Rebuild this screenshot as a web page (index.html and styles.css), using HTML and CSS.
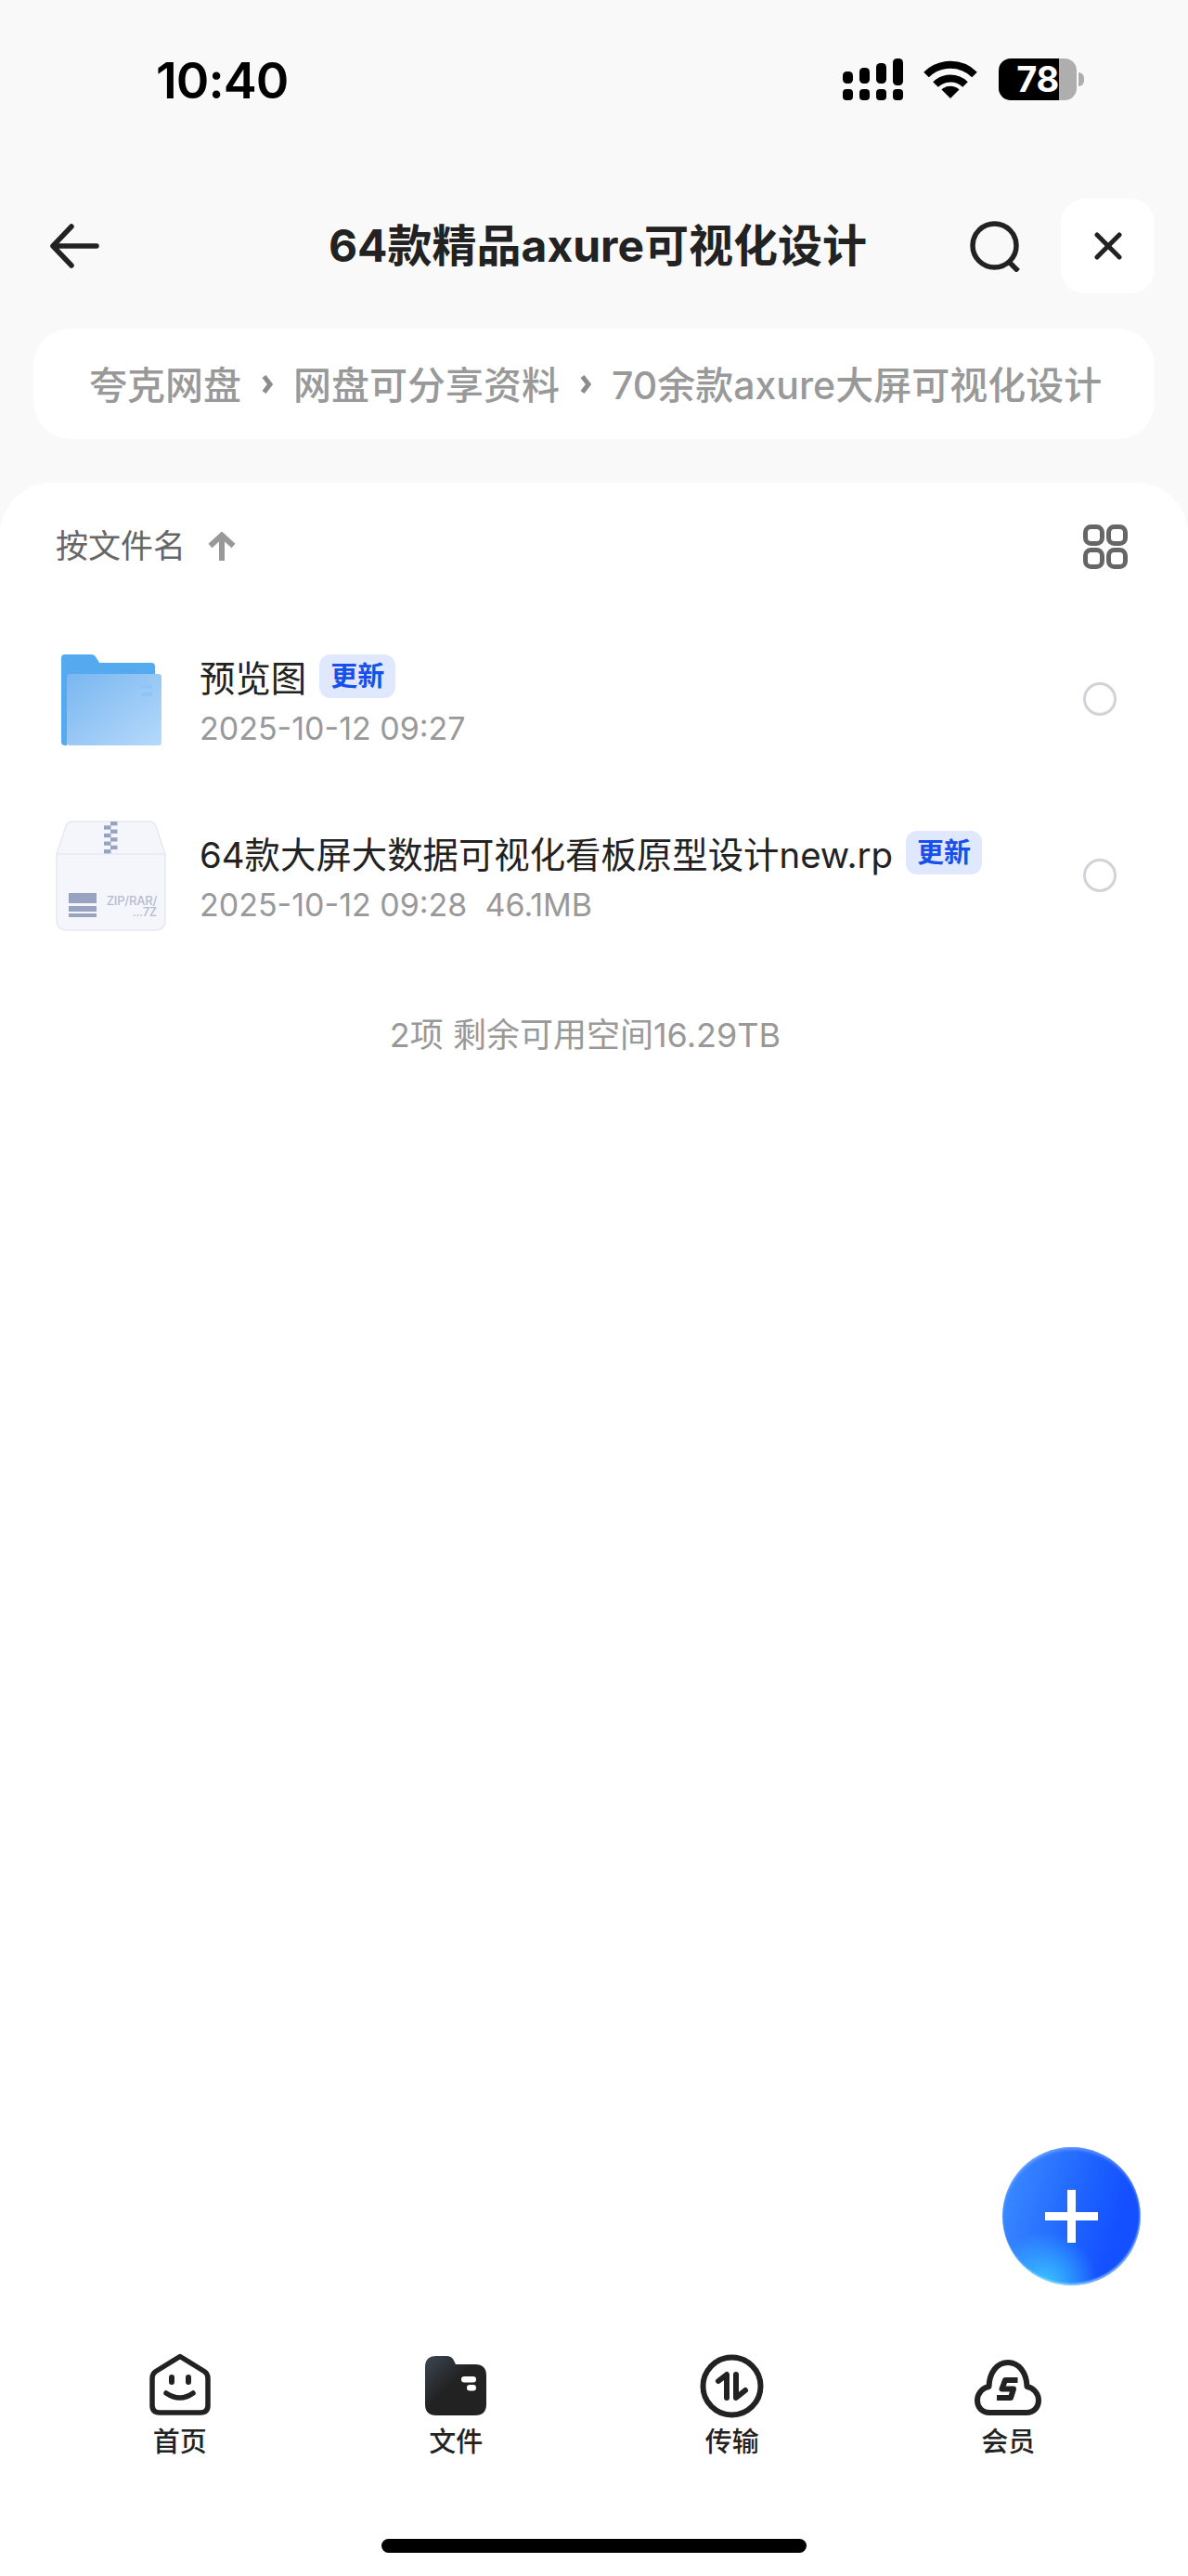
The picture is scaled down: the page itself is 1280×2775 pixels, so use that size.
FILE: index.html
```html
<!DOCTYPE html>
<html lang="zh-CN">
<head>
<meta charset="utf-8">
<title>64款精品axure可视化设计</title>
<link rel="stylesheet" href="styles.css">
</head>
<body>
<div class="app">
  <div class="status">
    <span class="time">10:40</span>
    <div class="status-icons">
      <svg class="signal" width="65" height="45" viewBox="0 0 65 45" fill="#000">
        <rect x="0" y="14" width="11" height="13" rx="4.5"/><rect x="18" y="10" width="11" height="17" rx="4.5"/><rect x="36" y="5" width="11" height="22" rx="4.5"/><rect x="54" y="0" width="11" height="29" rx="4.5"/>
        <rect x="0" y="33" width="11" height="12" rx="4"/><rect x="18" y="33" width="11" height="12" rx="4"/><rect x="36" y="33" width="11" height="12" rx="4"/><rect x="54" y="33" width="11" height="12" rx="4"/>
      </svg>
      <svg class="wifi" width="58" height="41" viewBox="0 0 58 41" fill="none" stroke="#000" stroke-width="8">
        <path d="M3 15.5A37 37 0 0 1 55 15.5"/><path d="M13 26A23 23 0 0 1 45 26"/><path d="M29 41L19.5 31.5A14 14 0 0 1 38.5 31.5Z" fill="#000" stroke="none"/>
      </svg>
      <div class="battery"><span class="battery-body">78</span><span class="battery-nub"></span></div>
    </div>
  </div>

  <header class="nav">
    <svg class="back" width="53" height="48" viewBox="0 0 53 48" fill="none" stroke="#222" stroke-width="5.5" stroke-linecap="round" stroke-linejoin="round"><path d="M23 3L3 24L23 45M3 24H50"/></svg>
    <h1 class="title">64款精品axure可视化设计</h1>
    <svg class="search" width="55" height="55" viewBox="0 0 55 55" fill="none" stroke="#222" stroke-width="5.5"><circle cx="26.5" cy="26.5" r="23.5"/><path d="M41 43L52 54"/></svg>
    <div class="close">
      <svg width="30" height="30" viewBox="0 0 30 30" fill="none" stroke="#222" stroke-width="5" stroke-linecap="round"><path d="M3 3L27 27M27 3L3 27"/></svg>
    </div>
  </header>

  <nav class="crumbs">
    <span>夸克网盘</span>
    <svg class="chev" width="12" height="20" viewBox="0 0 12 20" fill="none" stroke="#8c8c8c" stroke-width="5"><path d="M2.5 1.500L9 10L2.500 18.500"/></svg>
    <span>网盘可分享资料</span>
    <svg class="chev" width="12" height="20" viewBox="0 0 12 20" fill="none" stroke="#8c8c8c" stroke-width="5"><path d="M2.5 1.500L9 10L2.500 18.500"/></svg>
    <span>70余款axure大屏可视化设计</span>
  </nav>

  <main class="panel">
    <div class="sort">
      <span class="sort-label">按文件名</span>
      <svg class="sort-arrow" width="30" height="31" viewBox="0 0 30 31" fill="none" stroke="#999" stroke-width="6"><path d="M15 31V4M2.5 15L15 3.5L27.5 15"/></svg>
      <svg class="grid-icon" width="48" height="48" viewBox="0 0 48 48" fill="none" stroke="#666" stroke-width="5"><rect x="2.5" y="2.5" width="18" height="18" rx="6"/><rect x="27.5" y="2.5" width="18" height="18" rx="6"/><rect x="2.5" y="27.5" width="18" height="18" rx="6"/><rect x="27.5" y="27.5" width="18" height="18" rx="6"/></svg>
    </div>

    <div class="row">
      <div class="file-icon folder-icon">
        <svg width="108" height="98" viewBox="0 0 108 98">
          <defs><linearGradient id="fg" x1="0" y1="0" x2="1" y2="1"><stop offset="0" stop-color="#79b7f0"/><stop offset="1" stop-color="#b6d9fb"/></linearGradient></defs>
          <path d="M4 0H32Q36 0 38 4L41 9H97Q101 9 101 13V40H6V98H4Q0 98 0 94V4Q0 0 4 0Z" fill="#55a9ee"/>
          <rect x="6" y="21" width="102" height="77" rx="3" fill="url(#fg)"/>
          <rect x="86" y="33" width="12" height="4" fill="#8fc4f5"/><rect x="86" y="41" width="12" height="4" fill="#8fc4f5"/>
        </svg>
      </div>
      <div class="file-text">
        <div class="file-name"><span>预览图</span><span class="tag">更新</span></div>
        <div class="file-meta">2025-10-12 09:27</div>
      </div>
      <span class="radio"></span>
    </div>

    <div class="row">
      <div class="file-icon">
        <svg width="119" height="119" viewBox="0 0 119 119">
          <path d="M18 1H101Q106 1 108 6L118 36V107Q118 118 107 118H12Q1 118 1 107V36L11 6Q13 1 18 1Z" fill="#f4f6fc" stroke="#e6e9f2" stroke-width="1.5"/>
          <path d="M1 36H118" stroke="#e6e9f2" stroke-width="1.5"/>
          <g fill="#98a3c2">
            <rect x="59" y="1" width="7.5" height="4.3"/><rect x="52" y="5.3" width="7.5" height="4.3"/><rect x="59" y="9.6" width="7.5" height="4.3"/><rect x="52" y="13.9" width="7.5" height="4.3"/><rect x="59" y="18.2" width="7.5" height="4.3"/><rect x="52" y="22.5" width="7.5" height="4.3"/><rect x="59" y="26.8" width="7.5" height="4.3"/><rect x="52" y="31.1" width="7.5" height="4.3"/>
            <rect x="14" y="78" width="30" height="11"/><rect x="14" y="92" width="30" height="6"/><rect x="14" y="100" width="30" height="4"/>
          </g>
          <text class="zip-label" x="109" y="91" text-anchor="end">ZIP/RAR/</text>
          <text class="zip-label" x="109" y="103" text-anchor="end">...7Z</text>
        </svg>
      </div>
      <div class="file-text">
        <div class="file-name"><span>64款大屏大数据可视化看板原型设计new.rp</span><span class="tag">更新</span></div>
        <div class="file-meta">2025-10-12 09:28&nbsp;&nbsp;46.1MB</div>
      </div>
      <span class="radio"></span>
    </div>

    <p class="summary">2项 剩余可用空间16.29TB</p>

    <div class="tabs">
      <div class="tab">
        <svg width="66" height="67" viewBox="0 0 66 67" fill="none" stroke="#222" stroke-width="5.5" stroke-linecap="round" stroke-linejoin="round"><path d="M33 3.5L59 19.5Q63 22 63 27V56Q63 64 55 64H11Q3 64 3 56V27Q3 22 7 19.5Z"/><path d="M18 43Q33 53 47 43"/><path d="M24 26V31M42 26V31" stroke-width="6"/></svg>
        <span>首页</span>
      </div>
      <div class="tab">
        <svg width="66" height="64" viewBox="0 0 66 64">
          <defs><linearGradient id="tf" x1="0" y1="0" x2="0.7" y2="0.7"><stop offset="0" stop-color="#3c4753"/><stop offset="0.65" stop-color="#222"/></linearGradient></defs>
          <path d="M12 0H23Q29 0 31 5L33 9H54Q66 9 66 21V52Q66 64 54 64H12Q0 64 0 52V12Q0 0 12 0Z" fill="url(#tf)"/>
          <rect x="39" y="22" width="16" height="6.5" rx="3.2" fill="#fff"/><rect x="45" y="31" width="10" height="6.5" rx="3.2" fill="#fff"/>
        </svg>
        <span>文件</span>
      </div>
      <div class="tab tab-round">
        <svg width="69" height="69" viewBox="0 0 69 69" fill="none" stroke="#222" stroke-width="6" stroke-linecap="round" stroke-linejoin="round"><circle cx="34.5" cy="34.5" r="31"/><path d="M20 29L29 22V47M39 22V47L49 39"/></svg>
        <span>传输</span>
      </div>
      <div class="tab">
        <svg width="72" height="60" viewBox="0 0 72 60" fill="none" stroke="#222" stroke-width="6" stroke-linejoin="round"><path d="M16 57H56C64 57 69 51 69 44C69 36 63 30 56.500 29C56 14 48 3 36 3C24 3 16 14 15.500 29C9 30 3 36 3 44C3 51 8 57 16 57Z"/><path d="M46.500 22H33L29.500 31.500H42L39 41H24" stroke-width="6"/></svg>
        <span>会员</span>
      </div>
    </div>
    <div class="home-bar"></div>
  </main>

  <button class="fab" type="button" aria-label="新建"></button>
</div>
</body>
</html>
```

FILE: styles.css
```css
* { box-sizing: border-box; }
html, body { margin: 0; padding: 0; }
body { font-family: "Inter", "Noto Sans CJK SC", sans-serif; background: #fff; }
svg { display: block; flex: none; }

.app {
  position: relative;
  width: 1280px;
  height: 2775px;
  display: flex;
  flex-direction: column;
  background: #f9f9f9;
  overflow: hidden;
}

.status {
  height: 214px;
  flex: none;
  display: flex;
  justify-content: space-between;
  align-items: flex-start;
  padding: 54px 112px 0 168px;
}
.time { font-size: 54px; line-height: 66px; font-weight: 600; color: #000; letter-spacing: -1px; }
.status-icons { display: flex; align-items: flex-start; margin-top: 9px; }
.wifi { margin: 2px 23px 0 22px; }
.battery { display: flex; align-items: center; }
.battery-body {
  width: 84px;
  height: 45px;
  border-radius: 13px;
  background: linear-gradient(90deg, #000 77.400%, #aeaeae 77.400%);
  color: #fff;
  font-size: 38px;
  line-height: 45px;
  font-weight: 700;
  text-align: center;
  letter-spacing: -0.5px;
}
.battery-nub { width: 6px; height: 15px; margin-left: 2px; border-radius: 0 8px 8px 0; background: #aeaeae; }

.nav {
  height: 102px;
  flex: none;
  display: flex;
  align-items: center;
  padding: 0 36px 0 54px;
}
.title {
  flex: 1;
  margin: 0;
  padding-left: 150px;
  text-align: center;
  font-size: 48px;
  line-height: 60px;
  font-weight: 700;
  color: #222;
  white-space: nowrap;
}
.search { margin-left: 14px; }
.close {
  width: 101px;
  height: 102px;
  margin-left: 43px;
  border-radius: 26px;
  background: #fff;
  display: flex;
  align-items: center;
  justify-content: center;
}

.crumbs {
  flex: none;
  height: 119px;
  margin: 38px 36px 0;
  padding: 0 0 4px 60px;
  border-radius: 40px;
  background: #fff;
  display: flex;
  align-items: center;
  gap: 22px;
  font-size: 41px;
  font-weight: 500;
  color: #999;
  white-space: nowrap;
}
.chev { margin-top: 4px; }

.panel {
  flex: 1;
  margin-top: 47px;
  min-height: 0;
  background: #fff;
  border-radius: 56px 56px 0 0;
  display: flex;
  flex-direction: column;
  padding-bottom: 25px;
}

.sort {
  height: 138px;
  flex: none;
  display: flex;
  align-items: center;
  padding: 0 65px 0 60px;
}
.sort-label { font-size: 35px; line-height: 50px; font-weight: 400; color: #666; margin-bottom: 2px; }
.sort-arrow { margin-left: 24px; margin-bottom: 2px; }
.grid-icon { margin-left: auto; }

.row {
  height: 190px;
  flex: none;
  display: flex;
  align-items: center;
  padding: 0 77px 0 60px;
}
.file-icon { width: 119px; display: flex; justify-content: center; flex: none; }
.folder-icon { margin-top: 2px; }
.file-text { margin-left: 36px; display: flex; flex-direction: column; gap: 16px; }
.file-name {
  display: flex;
  align-items: center;
  gap: 14px;
  height: 47px;
  font-size: 38.4px;
  color: #222;
  white-space: nowrap;
}
.tag {
  height: 47px;
  padding: 0 12px;
  border-radius: 12px;
  background: #e0e8fd;
  color: #1750eb;
  font-size: 29px;
  line-height: 47px;
  font-weight: 700;
}
.file-meta { font-size: 34px; line-height: 34px; color: #999; white-space: pre; }
.radio {
  width: 36px;
  height: 36px;
  margin-left: auto;
  border: 3px solid #d2d2d7;
  border-radius: 50%;
}
.zip-label { font-size: 13px; font-weight: 500; fill: #b5bccf; font-family: "Inter", sans-serif; letter-spacing: -0.2px; }

.summary {
  margin: 52px 0 0;
  padding-right: 19px;
  text-align: center;
  font-size: 36px;
  line-height: 50px;
  color: #999;
}

.tabs {
  margin-top: auto;
  padding: 0 45px;
  display: grid;
  grid-template-columns: repeat(4, 1fr);
}
.tab {
  display: flex;
  flex-direction: column;
  align-items: center;
  justify-content: flex-end;
  gap: 12px;
  font-size: 29px;
  line-height: 34px;
  font-weight: 500;
  color: #222;
}
.tab-round { gap: 9px; }
.home-bar {
  flex: none;
  width: 458px;
  height: 15px;
  margin: 87px auto 0;
  border-radius: 8px;
  background: #000;
}

.fab {
  position: absolute;
  right: 51px;
  bottom: 313px;
  width: 149px;
  height: 149px;
  padding: 0;
  border: 0;
  border-radius: 50%;
  background:
    linear-gradient(#fff, #fff) center / 57px 9px no-repeat,
    linear-gradient(#fff, #fff) center / 9px 57px no-repeat,
    radial-gradient(circle at 30% 100%, #3cc6ff 0, rgba(60, 198, 255, 0) 32%),
    linear-gradient(105deg, #3f8fff 0, #1d62ff 55%, #1450ff 78%);
  box-shadow: inset 0 3px 3px rgba(255, 255, 255, 0.25), inset -1px -2px 2px rgba(190, 240, 255, 0.6);
}
```
